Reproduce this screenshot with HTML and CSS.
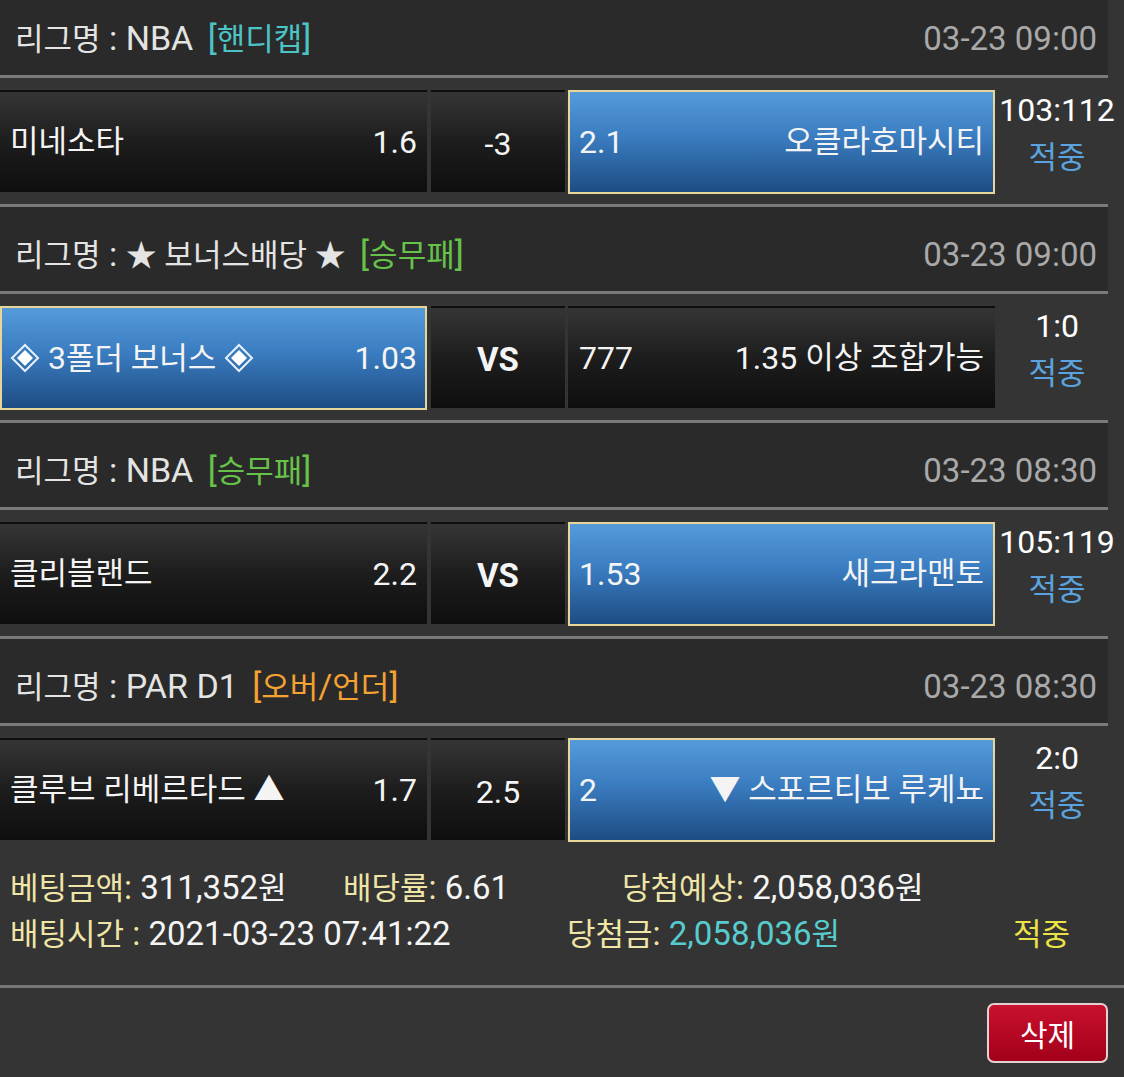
FILE: index.html
```html
<!DOCTYPE html>
<html lang="ko">
<head>
<meta charset="utf-8">
<title>베팅내역</title>
<link rel="stylesheet" href="styles.css">
</head>
<body>
<div class="list">
  <section class="game">
    <div class="league">
      <div class="league-name"><span class="k">리그명</span> : NBA <span class="tag tag-handicap">[<span class="k">핸디캡</span>]</span></div>
      <div class="league-time">03-23 09:00</div>
    </div>
    <div class="match">
      <div class="cell home"><span class="team k">미네소타</span><span class="odds">1.6</span></div>
      <div class="cell mid">-3</div>
      <div class="cell away selected"><span class="odds">2.1</span><span class="team k">오클라호마시티</span></div>
      <div class="result"><div class="score">103:112</div><div class="status">적중</div></div>
    </div>
  </section>

  <section class="game">
    <div class="league">
      <div class="league-name"><span class="k">리그명</span> : <span class="k">★ 보너스배당 ★</span> <span class="tag tag-wdl">[<span class="k">승무패</span>]</span></div>
      <div class="league-time">03-23 09:00</div>
    </div>
    <div class="match">
      <div class="cell home selected">
        <span class="team">
          <svg class="dia" viewBox="0 0 30 30" aria-hidden="true"><path d="M15 2 L28 15 L15 28 L2 15 Z" fill="none" stroke="#e8f0fa" stroke-width="2"/><path d="M15 7 L23 15 L15 23 L7 15 Z" fill="#ffffff"/></svg>
          <span>3<span class="k">폴더 보너스</span></span>
          <svg class="dia" viewBox="0 0 30 30" aria-hidden="true"><path d="M15 2 L28 15 L15 28 L2 15 Z" fill="none" stroke="#e8f0fa" stroke-width="2"/><path d="M15 7 L23 15 L15 23 L7 15 Z" fill="#ffffff"/></svg>
        </span>
        <span class="odds">1.03</span>
      </div>
      <div class="cell mid vs">VS</div>
      <div class="cell away"><span class="odds">777</span><span class="team">1.35 <span class="k">이상 조합가능</span></span></div>
      <div class="result"><div class="score">1:0</div><div class="status">적중</div></div>
    </div>
  </section>

  <section class="game">
    <div class="league">
      <div class="league-name"><span class="k">리그명</span> : NBA <span class="tag tag-wdl">[<span class="k">승무패</span>]</span></div>
      <div class="league-time">03-23 08:30</div>
    </div>
    <div class="match">
      <div class="cell home"><span class="team k">클리블랜드</span><span class="odds">2.2</span></div>
      <div class="cell mid vs">VS</div>
      <div class="cell away selected"><span class="odds">1.53</span><span class="team k">새크라맨토</span></div>
      <div class="result"><div class="score">105:119</div><div class="status">적중</div></div>
    </div>
  </section>

  <section class="game">
    <div class="league">
      <div class="league-name"><span class="k">리그명</span> : PAR D1 <span class="tag tag-ou">[<span class="k">오버</span>/<span class="k">언더</span>]</span></div>
      <div class="league-time">03-23 08:30</div>
    </div>
    <div class="match">
      <div class="cell home"><span class="team k">클루브 리베르타드 ▲</span><span class="odds">1.7</span></div>
      <div class="cell mid">2.5</div>
      <div class="cell away selected"><span class="odds">2</span><span class="team k">▼ 스포르티보 루케뇨</span></div>
      <div class="result"><div class="score">2:0</div><div class="status">적중</div></div>
    </div>
  </section>
</div>

<div class="summary">
  <div class="sum-row">
    <span class="item w1"><span class="label"><span class="k">베팅금액</span>:</span> 311,352<span class="k">원</span></span>
    <span class="item w2"><span class="label"><span class="k">배당률</span>:</span> 6.61</span>
    <span class="item"><span class="label"><span class="k">당첨예상</span>:</span> 2,058,036<span class="k">원</span></span>
  </div>
  <div class="sum-row">
    <span class="item w3"><span class="label"><span class="k">배팅시간</span> :</span> 2021-03-23 07:41:22</span>
    <span class="item w4"><span class="label"><span class="k">당첨금</span>:</span> <span class="win-amount">2,058,036<span class="k">원</span></span></span>
    <span class="item final k">적중</span>
  </div>
</div>

<div class="actions">
  <button class="btn-delete" type="button">삭제</button>
</div>
</body>
</html>
```

FILE: styles.css
```css
* {
  box-sizing: border-box;
  margin: 0;
  padding: 0;
}

html,
body {
  background: #343434;
}

body {
  width: 1124px;
  overflow: hidden;
  font-family: "Roboto", "Noto Sans CJK KR", sans-serif;
  color: #f3f3f3;
}

.k {
  font-size: 31px;
}

.list {
  margin-top: -12px;
}

/* league header */
.league {
  width: 1108px;
  height: 90px;
  border-top: 3px solid #7a7a7a;
  border-bottom: 3px solid #7a7a7a;
  background: #2a2a2a;
  display: flex;
  align-items: center;
  justify-content: space-between;
  padding: 11px 11px 0 15px;
  font-size: 34px;
  line-height: 40px;
  color: #e4e4e4;
  white-space: nowrap;
}

.tag {
  margin-left: 6px;
}

.tag-handicap {
  color: #4cc3c6;
}

.tag-wdl {
  color: #67c24a;
}

.tag-ou {
  color: #f4a232;
}

.league-time {
  font-size: 33px;
  color: #a9a9a9;
}

/* match row */
.match {
  display: flex;
  height: 126px;
  padding: 12px 0 10px;
}

.cell {
  height: 104px;
  border: 2px solid transparent;
  background: linear-gradient(#353535 0%, #1d1d1d 50%, #0e0e0e 100%);
  display: flex;
  align-items: center;
  justify-content: space-between;
  padding: 0 8px;
  font-size: 32px;
  line-height: 40px;
  color: #f4f4f4;
  white-space: nowrap;
}

.home {
  width: 427px;
}

.mid {
  width: 134px;
  margin-left: 4px;
  justify-content: center;
  padding-top: 4px;
}

.away {
  width: 427px;
  margin-left: 3px;
  padding: 0 9px 0 9px;
}

.vs {
  font-weight: 700;
  font-size: 33px;
}

.selected {
  border-color: #e7d699;
  background: linear-gradient(#559bda 0%, #3a7cc0 45%, #1d4c83 100%);
}

.team {
  display: flex;
  align-items: center;
  gap: 8px;
}

.dia {
  width: 30px;
  height: 30px;
  flex: none;
}

.result {
  flex: 1;
  height: 104px;
  display: flex;
  flex-direction: column;
  align-items: center;
  justify-content: center;
  padding: 0 5px 16px 0;
  line-height: 47px;
}

.score {
  font-size: 32px;
  color: #ffffff;
}

.status {
  font-size: 31px;
  color: #5ba3de;
}

/* summary */
.summary {
  padding: 13px 0 28px 10px;
  border-bottom: 3px solid #777777;
  font-size: 33px;
  line-height: 46px;
  color: #f5f5f5;
}

.sum-row {
  display: flex;
  height: 46px;
  align-items: baseline;
  white-space: nowrap;
}

.item {
  display: inline-block;
}

.w1 {
  width: 333px;
}

.w2 {
  width: 279px;
}

.w3 {
  width: 557px;
}

.w4 {
  width: 446px;
}

.label {
  color: #efe5a6;
}

.win-amount {
  color: #58cccc;
}

.final {
  color: #ebe245;
}

/* actions */
.actions {
  display: flex;
  justify-content: flex-end;
  padding: 15px 16px 0 0;
}

.btn-delete {
  width: 121px;
  height: 60px;
  border: 2px solid #e4d2d2;
  border-radius: 7px;
  background: linear-gradient(#c9112d, #a2001a);
  color: #ffffff;
  font-family: "Noto Sans CJK KR", sans-serif;
  font-size: 30px;
  line-height: 1;
}
```
